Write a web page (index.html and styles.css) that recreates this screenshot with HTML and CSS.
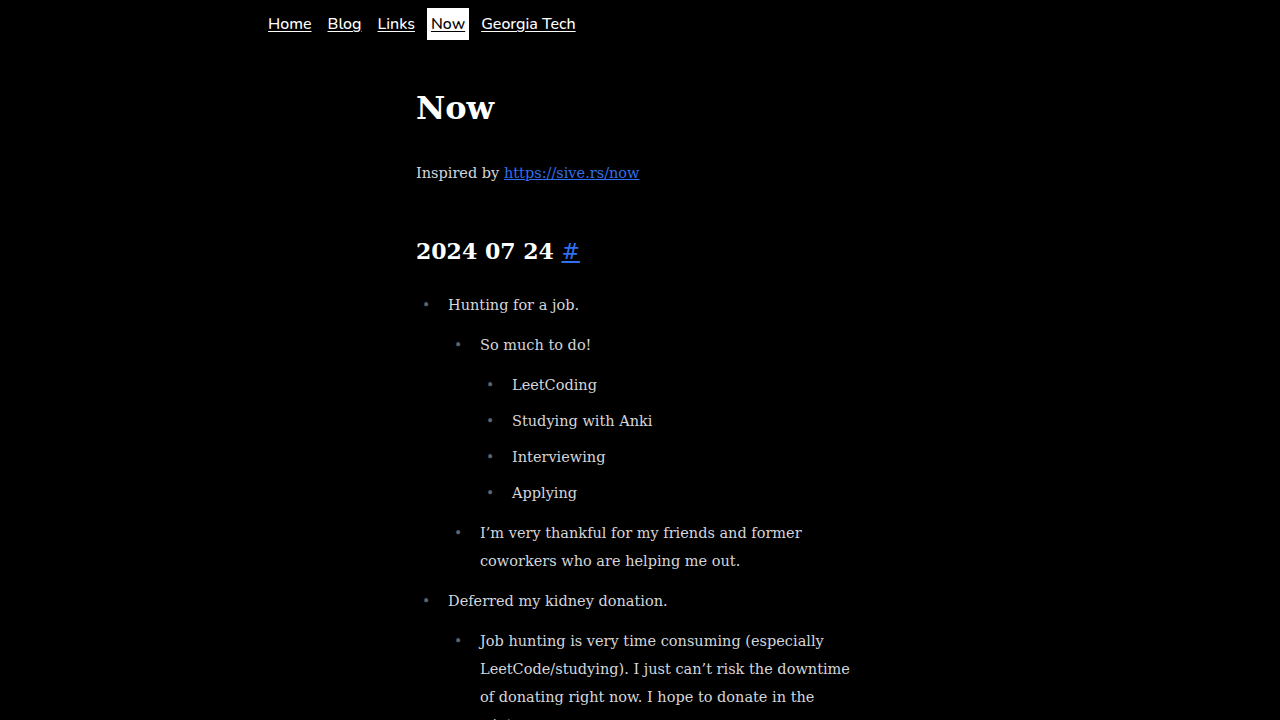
FILE: index.html
```html
<!DOCTYPE html>
<html lang="en">
<head>
<meta charset="utf-8">
<title>Now</title>
<link rel="stylesheet" href="styles.css">
</head>
<body>
<header class="site-header">
  <nav class="nav">
    <a class="nav-link" href="#">Home</a>
    <a class="nav-link" href="#">Blog</a>
    <a class="nav-link" href="#">Links</a>
    <a class="nav-link active" href="#">Now</a>
    <a class="nav-link" href="#">Georgia Tech</a>
  </nav>
</header>
<main class="content">
  <h1 class="title">Now</h1>
  <p class="intro">Inspired by <a class="link" href="#">https://sive.rs/now</a></p>
  <h2 class="date">2024 07 24 <a class="link anchor" href="#">#</a></h2>
  <ul class="list">
    <li>Hunting for a job.
      <ul class="list">
        <li>So much to do!
          <ul class="list">
            <li>LeetCoding</li>
            <li>Studying with Anki</li>
            <li>Interviewing</li>
            <li>Applying</li>
          </ul>
        </li>
        <li>I’m very thankful for my friends and former coworkers who are helping me out.</li>
      </ul>
    </li>
    <li>Deferred my kidney donation.
      <ul class="list">
        <li>Job hunting is very time consuming (especially LeetCode/studying). I just can’t risk the downtime of donating right now. I hope to donate in the winter.</li>
      </ul>
    </li>
  </ul>
</main>
</body>
</html>
```
FILE: styles.css
```css
html, body {
  margin: 0;
  padding: 0;
  background: #000;
}
body {
  color: #d4d6da;
  font-family: "DejaVu Serif", serif;
}
.site-header {
  max-width: 768px;
  margin: 0 auto;
  padding: 8px 8px 0;
  box-sizing: border-box;
}
.nav {
  display: flex;
  gap: 8px;
  font-family: "Nunito", "Lato", "Open Sans", sans-serif;
  font-size: 16px;
  font-weight: 500;
}
.nav-link {
  color: #fff;
  padding: 0 4px;
  height: 32px;
  line-height: 32px;
  text-decoration: underline;
  text-underline-offset: 2px;
}
.nav-link.active {
  background: #fff;
  color: #000;
}
.content {
  width: 448px;
  margin: 0 auto;
  padding-top: 44px;
  font-size: 14.5px;
  line-height: 28px;
}
.title {
  margin: 0;
  color: #fff;
  font-size: 32px;
  line-height: 48px;
  font-weight: 700;
}
.intro {
  margin: 27px 0 0;
}
.link {
  color: #2f6ff0;
  text-decoration: underline;
}
.date {
  margin: 48px 0 0;
  color: #fff;
  font-size: 22px;
  line-height: 32px;
  font-weight: 700;
}
.anchor {
  font-weight: 400;
}
.list {
  margin: 23px 0 0;
  padding-left: 32px;
  list-style: disc;
}
.list .list {
  margin: 12px 0 0;
}
.list li {
  margin: 0 0 12px;
  padding-left: 0;
}
.list li::marker {
  content: "•\00a0\00a0\00a0\00a0";
  color: #5b6370;
  font-size: 14px;
  white-space: pre;
}
.list .list .list li {
  margin-bottom: 8px;
}
```
